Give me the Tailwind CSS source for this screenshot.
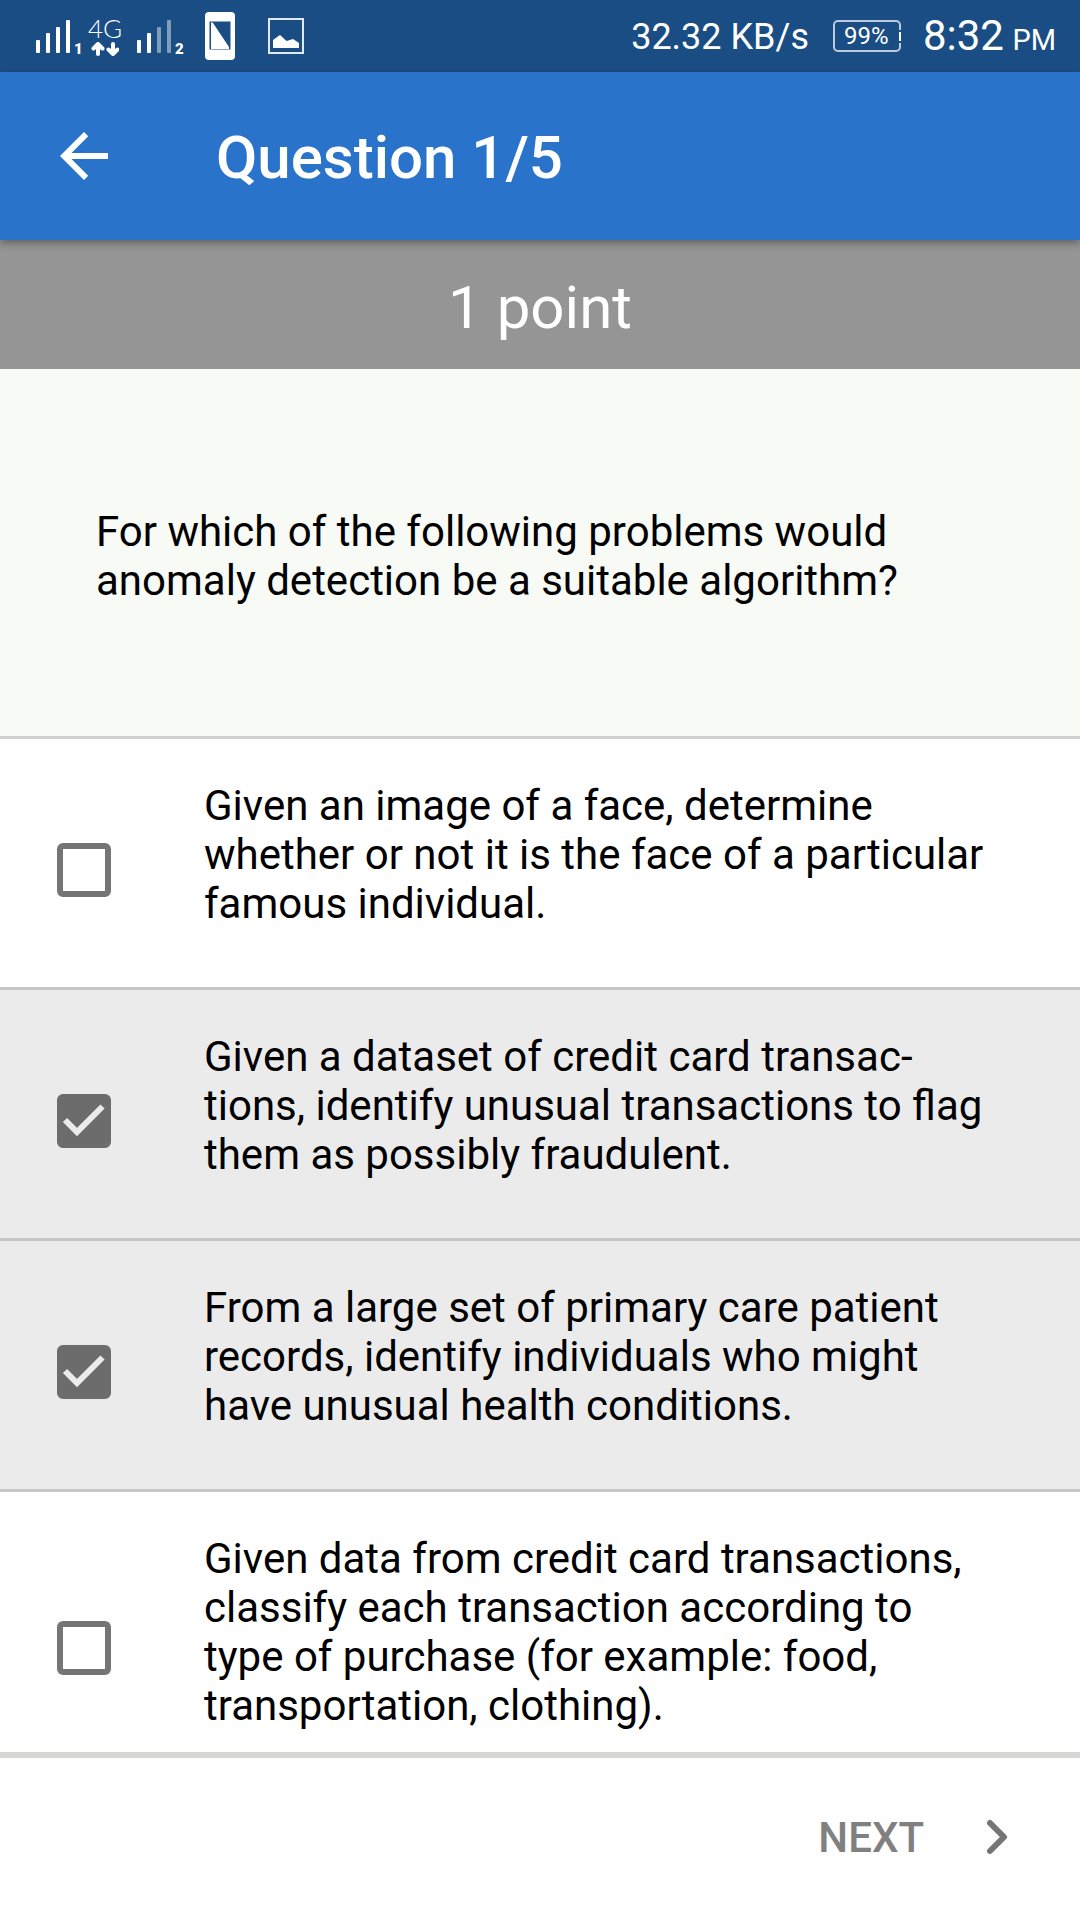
<!DOCTYPE html>
<html lang="en">
<head>
<meta charset="utf-8">
<meta name="viewport" content="width=device-width, initial-scale=1">
<title>Question 1/5</title>
<script src="https://cdn.jsdelivr.net/npm/@tailwindcss/browser@4"></script>
</head>
<body class="h-screen flex flex-col bg-white text-black font-['Roboto',sans-serif]">

<!-- Status bar -->
<div class="h-[72px] shrink-0 flex items-center justify-between bg-[#1b4d85] text-white pl-9 pr-6">
  <div class="flex items-center h-full">
    <div class="flex items-end h-[40px] w-[54px]">
      <svg class="w-[36px] h-[36px] shrink-0" viewBox="0 0 36 36" fill="currentColor" aria-hidden="true">
        <rect x="0" y="20" width="4" height="13" rx="1"/><rect x="10" y="13" width="4" height="20" rx="1"/><rect x="20" y="7" width="4" height="26" rx="1"/><rect x="30" y="0" width="4" height="33" rx="1"/>
      </svg>
      <span class="text-[15px] leading-[13px] font-black pl-[2px]">1</span>
    </div>
    <div class="flex flex-col items-center gap-[2px] w-[30px] h-[40px]">
      <span class="font-['Lato',sans-serif] font-light text-[26px] leading-[24px]">4G</span>
      <svg class="w-[28px] h-[14px] shrink-0" viewBox="0 0 28 14" fill="none" stroke="currentColor" stroke-width="4" stroke-linecap="round" stroke-linejoin="round" aria-hidden="true">
        <path d="M7 12V3M2.500 6.500L7 2L11.500 6.500M22 2V11M17.500 7.500L22 12L26.500 7.500"/>
      </svg>
    </div>
    <div class="flex items-end h-[40px] ml-[17px] w-[50px]">
      <svg class="w-[36px] h-[36px] shrink-0" viewBox="0 0 36 36" fill="currentColor" aria-hidden="true">
        <rect x="0" y="20" width="4" height="13" rx="1"/><rect x="10" y="13" width="4" height="20" rx="1"/><rect x="20" y="7" width="4" height="26" rx="1" opacity=".45"/><rect x="30" y="0" width="4" height="33" rx="1" opacity=".45"/>
      </svg>
      <span class="text-[15px] leading-[13px] font-black pl-[2px]">2</span>
    </div>
    <svg class="w-[30px] h-[48px] ml-[18px]" viewBox="0 0 30 48" aria-hidden="true">
      <rect width="30" height="48" rx="4" fill="#fff"/>
      <rect x="4.500" y="9.500" width="21" height="28" fill="#1b4d85"/>
      <path d="M6 11.500Q6 9.500 8 11L24 35V37H6Z" fill="#fff"/>
    </svg>
    <svg class="w-[36px] h-[36px] ml-[33px]" viewBox="0 0 36 36" aria-hidden="true">
      <rect x="1" y="1" width="34" height="34" fill="none" stroke="#e0e8f2" stroke-width="2"/>
      <path d="M5 30V22L12 17L18.500 23L25 21L31 25V30Z" fill="#fff"/>
    </svg>
  </div>
  <div class="flex items-center">
    <span class="pt-[2px] text-[36px] leading-[42px]">32.32 KB/s</span>
    <div class="relative ml-6 w-[68px] h-[32px] border-2 border-[#bccbdd] rounded-[5px] flex items-center pl-[9px] text-[24px] leading-[28px]">
      <span>99%</span>
      <i class="absolute -right-[2px] top-[8px] w-[2px] h-[13px] border-y-2 border-[#1b4d85] bg-white"></i>
    </div>
    <span class="ml-[22px] pt-1 text-[42px] leading-[49px]">8:32 <span class="text-[29px] -ml-[2px]">PM</span></span>
  </div>
</div>

<!-- App bar -->
<header class="relative z-10 h-[168px] shrink-0 flex items-center gap-24 pl-12 bg-[#2973cb] text-white shadow-[0_3px_8px_rgba(0,0,0,0.35)]">
  <button type="button" aria-label="Back" class="size-[72px]">
    <svg class="size-full" viewBox="0 0 24 24" fill="currentColor" aria-hidden="true"><path d="M20 11H7.830l5.590-5.590L12 4l-8 8 8 8 1.410-1.410L7.830 13H20v-2z"/></svg>
  </button>
  <h1 class="pt-1 text-[60px] leading-[70px] font-medium">Question 1/5</h1>
</header>

<div class="h-[129px] shrink-0 flex items-center justify-center pt-1.5 bg-[#959595] text-white text-[60px] leading-[70px]">1 point</div>

<!-- Question and answers -->
<main class="flex-1 min-h-0 overflow-y-auto [scrollbar-width:none] text-[42px] leading-[49px]">
  <p id="question" class="bg-[#f8faf5] px-24 pt-[138px] pb-[131px] border-b-3 border-[#d0d0d0] hyphens-manual">For which of the following problems would anomaly detection be a suitable algorithm?</p>
  <form aria-labelledby="question">
    <label class="flex items-center pt-[42px] pb-7 pl-[57px] pr-20 border-b-3 border-[#c6c6c6] has-checked:bg-[#ebebeb]">
      <span class="grid shrink-0 size-[54px] mr-[93px]">
        <input type="checkbox" class="peer col-start-1 row-start-1 appearance-none size-full border-6 border-[#757575] rounded-[6px] checked:bg-[#6c6c6c] checked:border-[#6c6c6c]">
        <svg class="hidden peer-checked:block col-start-1 row-start-1 size-full pointer-events-none" viewBox="0 0 54 54" fill="none" stroke="#ebebeb" stroke-width="6" aria-hidden="true"><path d="M8 26L20 38L45.500 12.500"/></svg>
      </span>
      <span class="pb-[31px]">Given an image of a face, determine whether or not it is the face of a particular famous individual.</span>
    </label>
    <label class="flex items-center pt-[42px] pb-7 pl-[57px] pr-20 border-b-3 border-[#c6c6c6] has-checked:bg-[#ebebeb]">
      <span class="grid shrink-0 size-[54px] mr-[93px]">
        <input type="checkbox" checked class="peer col-start-1 row-start-1 appearance-none size-full border-6 border-[#757575] rounded-[6px] checked:bg-[#6c6c6c] checked:border-[#6c6c6c]">
        <svg class="hidden peer-checked:block col-start-1 row-start-1 size-full pointer-events-none" viewBox="0 0 54 54" fill="none" stroke="#ebebeb" stroke-width="6" aria-hidden="true"><path d="M8 26L20 38L45.500 12.500"/></svg>
      </span>
      <span class="pb-[31px]">Given a dataset of credit card transac&shy;tions, identify unusual transactions to flag them as possibly fraudulent.</span>
    </label>
    <label class="flex items-center pt-[42px] pb-7 pl-[57px] pr-20 border-b-3 border-[#c6c6c6] has-checked:bg-[#ebebeb]">
      <span class="grid shrink-0 size-[54px] mr-[93px]">
        <input type="checkbox" checked class="peer col-start-1 row-start-1 appearance-none size-full border-6 border-[#757575] rounded-[6px] checked:bg-[#6c6c6c] checked:border-[#6c6c6c]">
        <svg class="hidden peer-checked:block col-start-1 row-start-1 size-full pointer-events-none" viewBox="0 0 54 54" fill="none" stroke="#ebebeb" stroke-width="6" aria-hidden="true"><path d="M8 26L20 38L45.500 12.500"/></svg>
      </span>
      <span class="pb-[31px]">From a large set of primary care patient records, identify individuals who might have unusual health conditions.</span>
    </label>
    <label class="flex items-center pt-[42px] pb-7 pl-[57px] pr-20 border-b-3 border-[#c6c6c6] has-checked:bg-[#ebebeb]">
      <span class="grid shrink-0 size-[54px] mr-[93px]">
        <input type="checkbox" class="peer col-start-1 row-start-1 appearance-none size-full border-6 border-[#757575] rounded-[6px] checked:bg-[#6c6c6c] checked:border-[#6c6c6c]">
        <svg class="hidden peer-checked:block col-start-1 row-start-1 size-full pointer-events-none" viewBox="0 0 54 54" fill="none" stroke="#ebebeb" stroke-width="6" aria-hidden="true"><path d="M8 26L20 38L45.500 12.500"/></svg>
      </span>
      <span class="pb-[31px]">Given data from credit card transactions, classify each transaction according to type of purchase (for example: food, transportation, clothing).</span>
    </label>
  </form>
</main>

<footer class="h-[168px] shrink-0 flex items-center justify-end pr-12 pb-1 border-t-6 border-[#d6d7d5] bg-[#fefefe]">
  <button type="button" class="flex items-center gap-9 text-[42px] leading-[49px] font-medium text-[#808080]">
    NEXT
    <svg class="size-[72px]" viewBox="0 0 72 72" fill="none" stroke="#757575" stroke-width="6" stroke-linecap="round" stroke-linejoin="round" aria-hidden="true"><path d="M30 22L44 36L30 50"/></svg>
  </button>
</footer>
</body>
</html>
